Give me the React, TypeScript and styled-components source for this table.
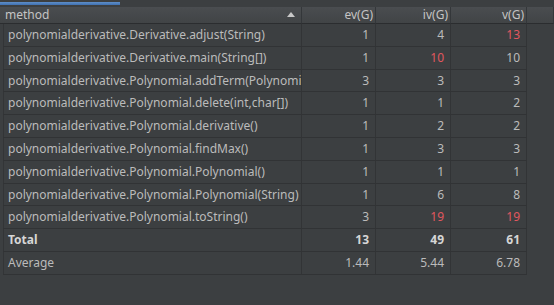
import React from 'react';
import styled, { createGlobalStyle } from 'styled-components';

const GlobalStyle = createGlobalStyle`
  html, body {
    margin: 0;
    padding: 0;
    background: #3c3f41;
  }
  body {
    font-family: "Noto Sans", "Open Sans", sans-serif;
    font-size: 12px;
    color: #bbbbbb;
  }
`;

const Page = styled.div`
  width: 554px;
  height: 305px;
  overflow: hidden;
  background: #3c3f41;
`;

const Progress = styled.div`
  height: 7px;
  display: flex;
  align-items: center;
`;

const ProgressFill = styled.div`
  height: 3px;
  width: 120px;
  background: linear-gradient(#5f8fc9, #3f70b0);
`;

const Table = styled.div`
  display: grid;
  grid-template-columns: 302px 74px 75px 76px 1fr;
`;

const HeadCell = styled.div<{ $right?: boolean }>`
  height: 16px;
  line-height: 16px;
  padding: 0 ${(p) => (p.$right ? '2px' : '5px')};
  text-align: ${(p) => (p.$right ? 'right' : 'left')};
  background: linear-gradient(#4a4d50, #414446);
  border-bottom: 1px solid #2b2d2f;
  border-right: 1px solid #34373a;
  color: #c4c4c4;
  position: relative;
  &:last-child {
    border-right: none;
  }
`;

const SortArrow = styled.span`
  position: absolute;
  right: 6px;
  top: 5px;
  width: 0;
  height: 0;
  border-left: 4px solid transparent;
  border-right: 4px solid transparent;
  border-bottom: 5px solid #c8c8c8;
`;

const Cell = styled.div<{ $right?: boolean; $bold?: boolean; $hot?: boolean; $first?: boolean }>`
  height: 21.8px;
  line-height: 21.8px;
  padding: 0 ${(p) => (p.$right ? '6px' : '4px')};
  text-align: ${(p) => (p.$right ? 'right' : 'left')};
  white-space: nowrap;
  overflow: hidden;
  border-bottom: 1px solid #313335;
  border-right: 1px solid #323436;
  border-left: ${(p) => (p.$first ? '1px solid #333537' : 'none')};
  margin-left: ${(p) => (p.$first ? '3px' : '0')};
  font-weight: ${(p) => (p.$bold ? 700 : 400)};
  color: ${(p) => (p.$hot ? '#e0575f' : p.$bold ? '#d6d6d6' : '#bbbbbb')};
`;

const Filler = styled.div`
  height: 22.8px;
`;

type Row = { name: string; ev: string; iv: string; v: string; hotIv?: boolean; hotV?: boolean; bold?: boolean };

const rows: Row[] = [
  { name: 'polynomialderivative.Derivative.adjust(String)', ev: '1', iv: '4', v: '13', hotV: true },
  { name: 'polynomialderivative.Derivative.main(String[])', ev: '1', iv: '10', v: '10', hotIv: true },
  { name: 'polynomialderivative.Polynomial.addTerm(Polynomial)', ev: '3', iv: '3', v: '3' },
  { name: 'polynomialderivative.Polynomial.delete(int,char[])', ev: '1', iv: '1', v: '2' },
  { name: 'polynomialderivative.Polynomial.derivative()', ev: '1', iv: '2', v: '2' },
  { name: 'polynomialderivative.Polynomial.findMax()', ev: '1', iv: '3', v: '3' },
  { name: 'polynomialderivative.Polynomial.Polynomial()', ev: '1', iv: '1', v: '1' },
  { name: 'polynomialderivative.Polynomial.Polynomial(String)', ev: '1', iv: '6', v: '8' },
  { name: 'polynomialderivative.Polynomial.toString()', ev: '3', iv: '19', v: '19', hotIv: true, hotV: true },
  { name: 'Total', ev: '13', iv: '49', v: '61', bold: true },
  { name: 'Average', ev: '1.44', iv: '5.44', v: '6.78' },
];

const App = () => (
  <Page>
    <GlobalStyle />
    <Progress>
      <ProgressFill />
    </Progress>
    <Table>
      <HeadCell>
        method
        <SortArrow />
      </HeadCell>
      <HeadCell $right>ev(G)</HeadCell>
      <HeadCell $right>iv(G)</HeadCell>
      <HeadCell $right>v(G)</HeadCell>
      <HeadCell />
      {rows.map((r) => (
        <React.Fragment key={r.name}>
          <Cell $first $bold={r.bold}>{r.name}</Cell>
          <Cell $right $bold={r.bold}>{r.ev}</Cell>
          <Cell $right $bold={r.bold} $hot={r.hotIv}>{r.iv}</Cell>
          <Cell $right $bold={r.bold} $hot={r.hotV}>{r.v}</Cell>
          <Filler />
        </React.Fragment>
      ))}
    </Table>
  </Page>
);

export default App;
